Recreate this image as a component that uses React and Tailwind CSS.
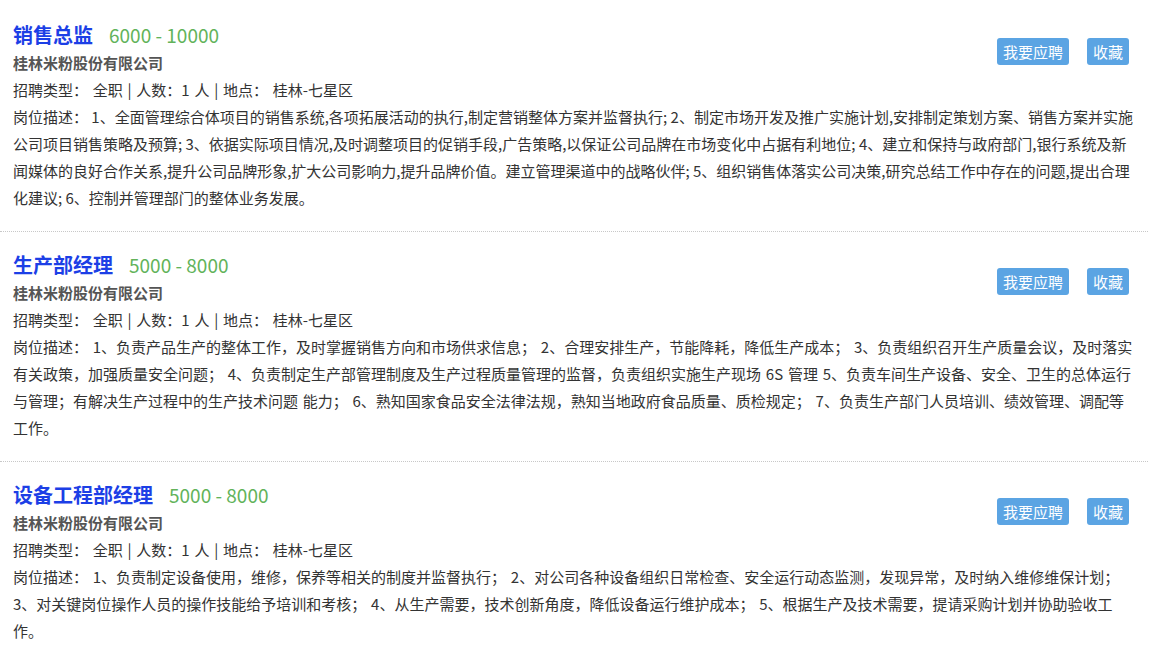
import React from "react";

const jobs = [
  {
    title: "销售总监",
    salary: "6000 - 10000",
    descClass: "leading-[27px]",
    desc: "岗位描述： 1、全面管理综合体项目的销售系统,各项拓展活动的执行,制定营销整体方案并监督执行; 2、制定市场开发及推广实施计划,安排制定策划方案、销售方案并实施公司项目销售策略及预算; 3、依据实际项目情况,及时调整项目的促销手段,广告策略,以保证公司品牌在市场变化中占据有利地位; 4、建立和保持与政府部门,银行系统及新闻媒体的良好合作关系,提升公司品牌形象,扩大公司影响力,提升品牌价值。建立管理渠道中的战略伙伴; 5、组织销售体落实公司决策,研究总结工作中存在的问题,提出合理化建议; 6、控制并管理部门的整体业务发展。",
  },
  {
    title: "生产部经理",
    salary: "5000 - 8000",
    descClass: "leading-[27px] [word-spacing:1.4px]",
    desc: "岗位描述： 1、负责产品生产的整体工作，及时掌握销售方向和市场供求信息； 2、合理安排生产，节能降耗，降低生产成本； 3、负责组织召开生产质量会议，及时落实有关政策，加强质量安全问题； 4、负责制定生产部管理制度及生产过程质量管理的监督，负责组织实施生产现场 6S 管理 5、负责车间生产设备、安全、卫生的总体运行与管理；有解决生产过程中的生产技术问题 能力； 6、熟知国家食品安全法律法规，熟知当地政府食品质量、质检规定； 7、负责生产部门人员培训、绩效管理、调配等工作。",
  },
  {
    title: "设备工程部经理",
    salary: "5000 - 8000",
    descClass: "leading-[27px] [word-spacing:1.4px]",
    desc: "岗位描述： 1、负责制定设备使用，维修，保养等相关的制度并监督执行； 2、对公司各种设备组织日常检查、安全运行动态监测，发现异常，及时纳入维修维保计划； 3、对关键岗位操作人员的操作技能给予培训和考核； 4、从生产需要，技术创新角度，降低设备运行维护成本； 5、根据生产及技术需要，提请采购计划并协助验收工作。",
  },
];

export default function App() {
  return (
    <div
      className="w-[1148px] bg-white pt-[2px] text-[15px] text-[#333]"
      style={{ fontFamily: '"Microsoft YaHei", "Noto Sans CJK SC", "Noto Sans", sans-serif' }}
    >
      {jobs.map((j, i) => (
        <div
          key={i}
          className="border-b border-dotted border-[#c8c8c8] pl-[13px] pr-[13px] pt-[19px] pb-[20px]"
        >
          <div className="flex justify-between">
            <div>
              <div className="flex h-[28px] items-center leading-[28px]">
                <span className="text-[20px] font-bold text-[#1c3fe6]">{j.title}</span>
                <span className="ml-[16px] text-[19px] text-[#62b35a]">{j.salary}</span>
              </div>
              <div className="text-[15px] font-bold leading-[27px] text-[#555]">
                桂林米粉股份有限公司
              </div>
            </div>
            <div className="mr-[6px] mt-[17px] flex gap-[18px]">
              <button className="h-[27px] rounded-[3px] bg-[#5ba4e3] px-[6px] text-[15px] leading-[27px] text-white">
                我要应聘
              </button>
              <button className="h-[27px] rounded-[3px] bg-[#5ba4e3] px-[6px] text-[15px] leading-[27px] text-white">
                收藏
              </button>
            </div>
          </div>
          <div className="leading-[27px] [word-spacing:1.4px]">
            招聘类型： 全职 | 人数：1 人 | 地点： 桂林-七星区
          </div>
          <div className={j.descClass}>{j.desc}</div>
        </div>
      ))}
    </div>
  );
}
